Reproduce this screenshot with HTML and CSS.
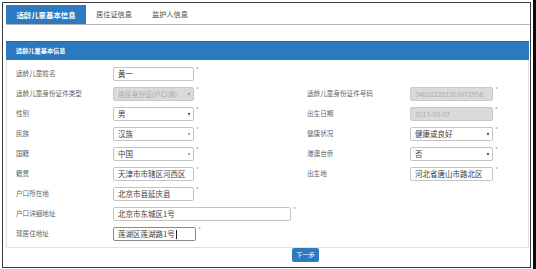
FILE: index.html
```html
<!DOCTYPE html>
<html lang="zh-CN">
<head>
<meta charset="utf-8">
<title>适龄儿童基本信息</title>
<link rel="stylesheet" href="styles.css">
</head>
<body>
<div class="frame">
  <div class="tabs">
    <div class="tab active">适龄儿童基本信息</div>
    <div class="tab">居住证信息</div>
    <div class="tab">监护人信息</div>
  </div>
  <div class="panel">
    <div class="panel-head">适龄儿童基本信息</div>
    <div class="panel-body">
      <div class="label">适龄儿童姓名</div>
      <div class="field"><div class="input">黄一</div><span class="req">*</span></div>
      <div class="blank"></div><div class="blank"></div>

      <div class="label">适龄儿童身份证件类型</div>
      <div class="field"><div class="input select disabled"><span>居民身份证(户口簿)</span><i class="arrow light"></i></div><span class="req">*</span></div>
      <div class="label">适龄儿童身份证件号码</div>
      <div class="field"><div class="input disabled">340102201303072958</div><span class="req">*</span></div>

      <div class="label">性别</div>
      <div class="field"><div class="input select"><span>男</span><i class="arrow"></i></div><span class="req">*</span></div>
      <div class="label">出生日期</div>
      <div class="field"><div class="input disabled">2013-03-07</div><span class="req">*</span></div>

      <div class="label">民族</div>
      <div class="field"><div class="input select"><span>汉族</span><i class="arrow light"></i></div><span class="req">*</span></div>
      <div class="label">健康状况</div>
      <div class="field"><div class="input select"><span>健康或良好</span><i class="arrow"></i></div><span class="req">*</span></div>

      <div class="label">国籍</div>
      <div class="field"><div class="input select"><span>中国</span><i class="arrow light"></i></div><span class="req">*</span></div>
      <div class="label">港澳台侨</div>
      <div class="field"><div class="input select"><span>否</span><i class="arrow"></i></div><span class="req">*</span></div>

      <div class="label">籍贯</div>
      <div class="field"><div class="input">天津市市辖区河西区</div><span class="req">*</span></div>
      <div class="label">出生地</div>
      <div class="field"><div class="input">河北省唐山市路北区</div><span class="req">*</span></div>

      <div class="label">户口所在地</div>
      <div class="field"><div class="input">北京市县延庆县</div><span class="req">*</span></div>
      <div class="blank"></div><div class="blank"></div>

      <div class="label">户口详细地址</div>
      <div class="field wide-cell"><div class="input wide">北京市东城区1号</div><span class="req">*</span></div>

      <div class="label">现居住地址</div>
      <div class="field wide-cell"><div class="input wide focus">莲湖区莲湖路1号<span class="caret"></span></div><span class="req">*</span></div>
    </div>
  </div>
  <div class="actions"><div class="btn">下一步</div></div>
</div>
<div class="edge"></div>
</body>
</html>
```

FILE: styles.css
```css
html, body {
  margin: 0;
  padding: 0;
  background: #ffffff;
}
body {
  display: flex;
  align-items: flex-start;
  width: 536px;
  height: 269px;
  overflow: hidden;
  font-family: "Noto Sans CJK SC", "Noto Sans", sans-serif;
}
.frame {
  box-sizing: border-box;
  width: 529px;
  height: 266px;
  margin: 2px 0 0 2px;
  border: 1px solid #3c3c3c;
  padding: 2px 0 0 3px;
  background: #fff;
}
.edge {
  width: 3px;
  height: 269px;
  margin-left: 2px;
  background: #0a0a0a;
}
.tabs {
  display: flex;
  height: 19px;
  border-bottom: 1px solid #b4b4b4;
}
.tab {
  padding: 0 10px;
  font-size: 7.2px;
  line-height: 19px;
  color: #4a4a4a;
}
.tab.active {
  width: 80px;
  box-sizing: border-box;
  padding: 0;
  text-align: center;
  background: #2c7bc0;
  color: #fff;
  font-weight: bold;
  font-size: 7.4px;
}
.panel {
  margin: 16px 1px 0 0;
}
.panel-head {
  height: 19px;
  box-sizing: border-box;
  border-top: 1px solid #246aa8;
  background: #2b79bf;
  color: #fff;
  font-weight: bold;
  font-size: 6.2px;
  line-height: 18px;
  padding-left: 10px;
}
.panel-body {
  display: grid;
  grid-template-columns: 97px 194px 103px 1fr;
  grid-auto-rows: 14px;
  row-gap: 6px;
  align-items: center;
  border: 1px solid #e0e0e0;
  border-top: none;
  padding: 7px 0 6px 9px;
}
.label {
  font-size: 6.6px;
  line-height: 10px;
  color: #626262;
  margin-top: -2px;
}
.field {
  display: flex;
  align-items: flex-start;
  height: 14px;
}
.wide-cell {
  grid-column: 2 / 5;
}
.input {
  box-sizing: border-box;
  width: 81px;
  height: 14px;
  border: 1px solid #c4c4c4;
  border-radius: 2px;
  background: #fff;
  font-size: 7.5px;
  line-height: 12px;
  color: #3c3c3c;
  padding: 0 4px;
  white-space: nowrap;
  overflow: hidden;
  display: flex;
  align-items: center;
}
.panel-body > .field:nth-child(4n) .input {
  width: 83px;
}
.input.wide {
  width: 178px;
}
.input.focus {
  border-color: #8a8a8a;
}
.caret {
  display: inline-block;
  width: 1px;
  height: 9px;
  background: #222;
  margin-left: 1px;
}
.input.select {
  justify-content: space-between;
}
.input.disabled {
  background: #dadada;
  border-color: #c9c9c9;
  color: #ababab;
  font-size: 6.8px;
}
.arrow {
  width: 0;
  height: 0;
  border-left: 1.5px solid transparent;
  border-right: 1.5px solid transparent;
  border-top: 3px solid #1e1e1e;
  margin-right: -1px;
}
.arrow.light {
  border-top-color: #8a8a8a;
}
.req {
  font-size: 6px;
  line-height: 6px;
  color: #9a9a9a;
  margin-left: 2px;
}
.actions {
  padding-left: 286px;
}
.btn {
  width: 27px;
  height: 14px;
  background: #2e7ac0;
  border-radius: 2px;
  color: #fff;
  font-size: 6.2px;
  line-height: 14px;
  text-align: center;
}
```
